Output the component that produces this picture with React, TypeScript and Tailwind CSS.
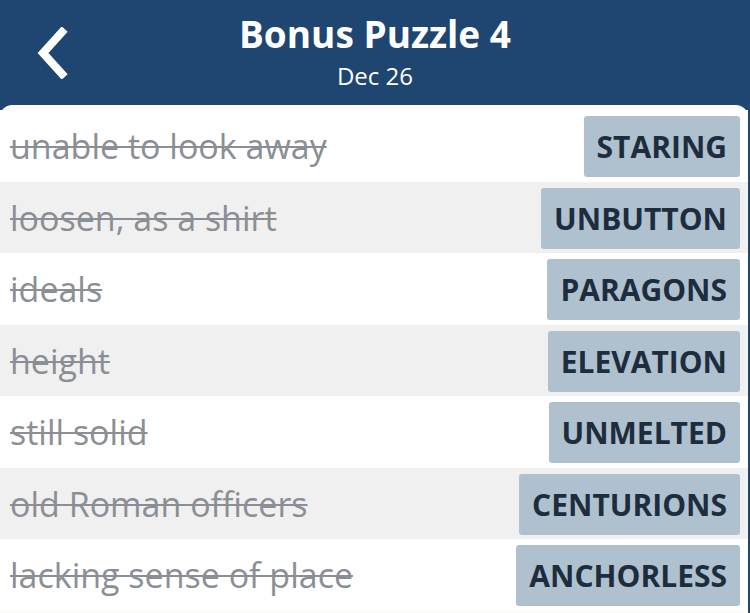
import React from "react";

type Clue = {
  clue: string;
  answer: string;
};

const clues: Clue[] = [
  { clue: "unable to look away", answer: "STARING" },
  { clue: "loosen, as a shirt", answer: "UNBUTTON" },
  { clue: "ideals", answer: "PARAGONS" },
  { clue: "height", answer: "ELEVATION" },
  { clue: "still solid", answer: "UNMELTED" },
  { clue: "old Roman officers", answer: "CENTURIONS" },
  { clue: "lacking sense of place", answer: "ANCHORLESS" },
];

function BackChevron() {
  return (
    <svg width="34" height="52" viewBox="0 0 34 52" fill="none">
      <path
        d="M27 5 L8 26 L27 47"
        stroke="white"
        strokeWidth="8"
        strokeLinecap="square"
        strokeLinejoin="miter"
      />
    </svg>
  );
}

export default function App() {
  return (
    <div
      className="flex h-[613px] w-[750px] flex-col overflow-hidden bg-[#1f4571]"
      style={{ fontFamily: "'Open Sans', 'Noto Sans', sans-serif" }}
    >
      <header className="relative flex h-[105px] shrink-0 flex-col items-center pt-[9px] text-white">
        <button type="button" className="absolute left-[35px] top-[27px]">
          <BackChevron />
        </button>
        <h1 className="text-[37px] font-bold leading-[50px]">Bonus Puzzle 4</h1>
        <p className="text-[24px] leading-[34px]">Dec 26</p>
      </header>

      <main className="mr-[2px] flex flex-1 flex-col rounded-t-[12px] bg-[#fafaf6] pt-[5px]">
        <div className="rounded-t-[12px] bg-white">
          {clues.map((item, i) => (
            <div
              key={item.answer}
              className={`flex h-[71.5px] items-start justify-between pl-[10px] pr-[8px] pt-[6px] ${
                i % 2 === 1 ? "bg-[#f0f0f0]" : "bg-white"
              }`}
            >
              <span className="mt-[7px] text-[34px] leading-[46px] text-[#8b8f95] line-through decoration-[2px]">
                {item.clue}
              </span>
              <span className="flex h-[61px] items-center rounded-[3px] bg-[#afc0cf] px-[13px] text-[30px] font-bold text-[#1d2d3e]">
                {item.answer}
              </span>
            </div>
          ))}
        </div>
      </main>
    </div>
  );
}
